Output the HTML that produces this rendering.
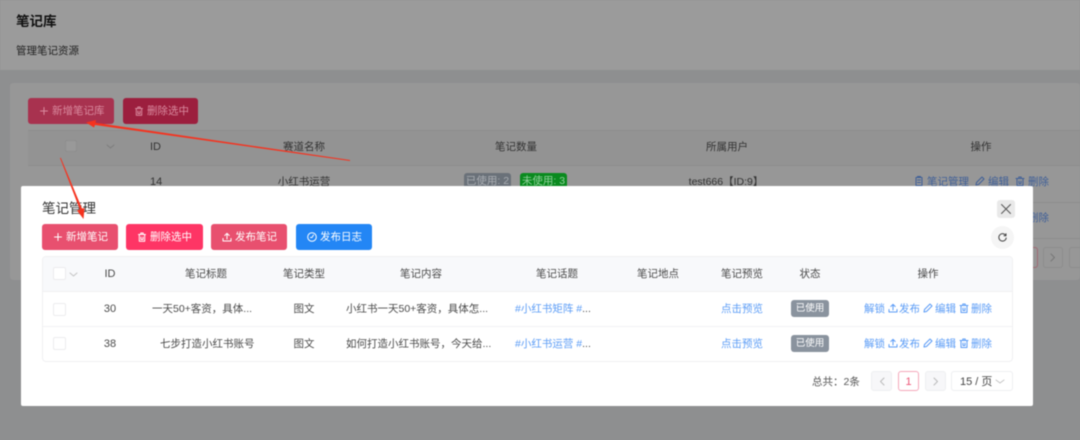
<!DOCTYPE html>
<html lang="zh"><head><meta charset="utf-8"><title>笔记库</title>
<style>
*{box-sizing:border-box;margin:0;padding:0}
html,body{width:1080px;height:440px;overflow:hidden;background:#8e8f90}
body{font-family:"Liberation Sans","Noto Sans CJK SC",sans-serif;font-size:10.5px;color:#4a4a4a}
#w{position:absolute;left:0;top:0;width:1080px;height:440px;overflow:hidden;filter:blur(.5px)}
.a{position:absolute}
.t{position:absolute;white-space:nowrap;line-height:14px;height:14px}
.c{transform:translateX(-50%)}
.b{position:absolute;height:26px;border-radius:3px;color:#fff;line-height:26px;white-space:nowrap}
.b svg,.i{position:absolute}
.l{color:#5b9cf6}
.dl{color:#3f5f97}
svg{fill:none;stroke:currentColor;stroke-width:1;stroke-linecap:round;stroke-linejoin:round;overflow:visible}
.cb{position:absolute;width:13px;height:13px;border:1px solid #ececee;border-radius:2px;background:#fff}
.tag{position:absolute;border-radius:3px;color:#fff;text-align:center;white-space:nowrap}
.p{position:absolute;height:20px;top:371px;border:1px solid #eeeff1;border-radius:3px;background:#fff}
</style></head><body>
<div id="w">
<div class="a" style="left:0;top:0;width:1080px;height:70px;background:#9b9b9b"></div>
<div class="a" style="left:10px;top:83px;width:1070px;height:197px;background:#979797;border-radius:3px"></div>

<div class="t" style="left:16px;top:15px;font-size:13.5px;font-weight:700;color:#111">笔记库</div>
<div class="t" style="left:16px;top:44px;color:#222">管理笔记资源</div>

<div class="b" style="left:28px;top:98px;width:86px;background:#a8324f;color:#d98a9e"><svg style="left:11px;top:8px" width="10" height="10" viewBox="0 0 10 10"><path d="M5 1.500v7M1.500 5h7"/></svg><span style="position:absolute;left:24px">新增笔记库</span></div>
<div class="b" style="left:123px;top:98px;width:75px;background:#9c1f3e;color:#d98a9e"><svg style="left:11px;top:8px" width="10" height="10" viewBox="0 0 10 10"><path d="M1.500 2.500h7M3.800 2.500V1h2.400v1.500M2.300 2.500v6.800h5.400V2.500M4 5v2.500h2V5"/></svg><span style="position:absolute;left:24px">删除选中</span></div>

<div class="a" style="left:28px;top:130px;width:1052px;height:36px;background:#939393;border-top:1px solid #8e8e8e;border-bottom:1px solid #8e8e8e"></div>
<div class="a" style="left:28px;top:202px;width:1052px;height:1px;background:#8d8d8d"></div>
<div class="a" style="left:28px;top:238px;width:1052px;height:1px;background:#8d8d8d"></div>
<div class="a" style="left:65px;top:140px;width:12px;height:12px;background:#999;border:1px solid #8e8e8e;border-radius:2px"></div>
<svg class="i" style="left:106px;top:144px;color:#7d7d7d" width="9" height="5" viewBox="0 0 9 5"><path d="M1 1l3.500 3L8 1"/></svg>
<div class="t" style="left:150px;top:140px;color:#333;font-size:11px">ID</div>
<div class="t c" style="left:304px;top:140px;color:#333">赛道名称</div>
<div class="t c" style="left:516px;top:140px;color:#333">笔记数量</div>
<div class="t c" style="left:727px;top:140px;color:#333">所属用户</div>
<div class="t c" style="left:981px;top:140px;color:#333">操作</div>
<div class="t" style="left:150px;top:175px;color:#333;font-size:11px">14</div>
<div class="t c" style="left:304px;top:175px;color:#333">小红书运营</div>
<div class="tag" style="left:464px;top:173px;width:47px;height:18px;line-height:16px;background:#6a7179;color:#a9adb2">已使用: 2</div>
<div class="tag" style="left:520px;top:173px;width:47px;height:18px;line-height:16px;background:#0a8a1f;color:#8fd09a">未使用: 3</div>
<div class="t c" style="left:726px;top:175px;color:#333;font-size:10.5px">test666【ID:9】</div>
<svg class="i dl" style="left:914px;top:176px" width="10" height="10" viewBox="0 0 10 10"><path d="M2 1.500h6v8H2zM3.500 1V.5h3V1M3.500 4h3M3.500 6.500h3"/></svg>
<div class="t dl" style="left:927px;top:175px">笔记管理</div>
<svg class="i dl" style="left:975px;top:176px" width="10" height="10" viewBox="0 0 10 10"><path d="M1 9l.5-2.500L7 1l2 2-5.500 5.500z"/></svg>
<div class="t dl" style="left:988px;top:175px">编辑</div>
<svg class="i dl" style="left:1015px;top:176px" width="10" height="10" viewBox="0 0 10 10"><path d="M1 2.500h8M3.800 2.500V1h2.400v1.500M2 2.500v7h6v-7M4 5v2.500h2V5"/></svg>
<div class="t dl" style="left:1028px;top:175px">删除</div>
<div class="t dl" style="left:1028px;top:211px">删除</div>
<div class="a" style="left:1020px;top:247px;width:18px;height:21px;border:1px solid #a06a74;border-radius:3px"></div>
<div class="a" style="left:1043px;top:247px;width:20px;height:21px;border:1px solid #8d8d8d;border-radius:3px"></div>
<svg class="i" style="left:1050px;top:253px;color:#777" width="6" height="9" viewBox="0 0 6 9"><path d="M1 1l3.500 3.500L1 8"/></svg>
<div class="a" style="left:1069px;top:247px;width:20px;height:21px;border:1px solid #8d8d8d;border-radius:3px"></div>

<!-- modal -->
<div class="a" style="left:21px;top:186px;width:1012px;height:220px;background:#fff;border-radius:2px"></div>
<div class="t" style="left:42px;top:202px;font-size:13.5px;color:#333">笔记管理</div>
<div class="a" style="left:997px;top:200px;width:18px;height:18px;background:#e9e9e9;border-radius:3px"></div>
<svg class="i" style="left:1001px;top:204px;color:#555" width="10" height="10" viewBox="0 0 10 10"><path d="M.5.500l9 9M9.500.500l-9 9"/></svg>

<div class="b" style="left:42px;top:224px;width:76px;background:#e8506f"><svg style="left:11px;top:8px" width="10" height="10" viewBox="0 0 10 10"><path d="M5 1.500v7M1.500 5h7"/></svg><span style="position:absolute;left:24px">新增笔记</span></div>
<div class="b" style="left:126px;top:224px;width:77px;background:#fe3565"><svg style="left:11px;top:8px" width="10" height="10" viewBox="0 0 10 10"><path d="M1.500 2.500h7M3.800 2.500V1h2.400v1.500M2.300 2.500v6.800h5.400V2.500M4 5v2.500h2V5"/></svg><span style="position:absolute;left:24px">删除选中</span></div>
<div class="b" style="left:211px;top:224px;width:76px;background:#e8506f"><svg style="left:11px;top:8px" width="10" height="10" viewBox="0 0 10 10"><path d="M5 7V1.500M2.800 3.500L5 1.300l2.200 2.200M1 6.500v2.500h8V6.500"/></svg><span style="position:absolute;left:24px">发布笔记</span></div>
<div class="b" style="left:296px;top:224px;width:76px;background:#2386f5"><svg style="left:11px;top:8px" width="10" height="10" viewBox="0 0 10 10"><circle cx="5" cy="5" r="4.300"/><path d="M6.500 3L5 5.500H3.500"/></svg><span style="position:absolute;left:24px">发布日志</span></div>

<div class="a" style="left:991px;top:226px;width:23px;height:23px;border-radius:50%;background:#f5f5f5"></div>
<svg class="i" style="left:998px;top:233px;color:#444" width="9" height="9" viewBox="0 0 9 9"><path d="M7.800 2.600A3.700 3.700 0 1 0 8.200 5M8 .8v2H6"/></svg>

<div class="a" style="left:42px;top:256px;width:971px;height:106px;border:1px solid #f0f0f2;border-radius:4px;overflow:hidden">
  <div class="a" style="left:0;top:0;width:971px;height:35px;background:#f8f9fb;border-bottom:1px solid #f0f0f2"></div>
  <div class="a" style="left:0;top:69px;width:971px;height:1px;background:#f2f2f4"></div>
</div>
<div class="cb" style="left:53px;top:267px"></div>
<svg class="i" style="left:69px;top:272px;color:#c4c4c4" width="9" height="5" viewBox="0 0 9 5"><path d="M1 1l3.500 3L8 1"/></svg>
<div class="t c" style="left:110px;top:267px;font-size:11px">ID</div>
<div class="t c" style="left:206px;top:267px">笔记标题</div>
<div class="t c" style="left:304px;top:267px">笔记类型</div>
<div class="t c" style="left:421px;top:267px">笔记内容</div>
<div class="t c" style="left:557px;top:267px">笔记话题</div>
<div class="t c" style="left:658px;top:267px">笔记地点</div>
<div class="t c" style="left:742px;top:267px">笔记预览</div>
<div class="t c" style="left:810px;top:267px">状态</div>
<div class="t c" style="left:928px;top:267px">操作</div>

<div class="cb" style="left:53px;top:303px"></div>
<div class="t c" style="left:110px;top:302px;font-size:11px">30</div>
<div class="t" style="left:152px;top:302px">一天50+客资，具体...</div>
<div class="t c" style="left:304px;top:302px">图文</div>
<div class="t" style="left:346px;top:302px">小红书一天50+客资，具体怎...</div>
<div class="t" style="left:515px;top:302px"><span class="l">#小红书矩阵 #</span>...</div>
<div class="t l" style="left:721px;top:302px">点击预览</div>
<div class="tag" style="left:791px;top:300px;width:38px;height:17px;line-height:17px;background:#8a939e;font-size:9.500px">已使用</div>

<div class="cb" style="left:53px;top:337px"></div>
<div class="t c" style="left:110px;top:337px;font-size:11px">38</div>
<div class="t" style="left:160px;top:337px">七步打造小红书账号</div>
<div class="t c" style="left:304px;top:337px">图文</div>
<div class="t" style="left:346px;top:337px">如何打造小红书账号，今天给...</div>
<div class="t" style="left:515px;top:337px"><span class="l">#小红书运营 #</span>...</div>
<div class="t l" style="left:721px;top:337px">点击预览</div>
<div class="tag" style="left:791px;top:335px;width:38px;height:17px;line-height:17px;background:#8a939e;font-size:9.500px">已使用</div>

<!-- row actions 1 -->
<div class="t l" style="left:864px;top:302px">解锁</div>
<svg class="i l" style="left:888px;top:303px" width="10" height="10" viewBox="0 0 10 10"><path d="M5 7V1.500M2.800 3.500L5 1.300l2.200 2.200M1 6.500v2.500h8V6.500"/></svg>
<div class="t l" style="left:899px;top:302px">发布</div>
<svg class="i l" style="left:923px;top:303px" width="10" height="10" viewBox="0 0 10 10"><path d="M1 9l.5-2.500L7 1l2 2-5.500 5.500z"/></svg>
<div class="t l" style="left:935px;top:302px">编辑</div>
<svg class="i l" style="left:959px;top:303px" width="10" height="10" viewBox="0 0 10 10"><path d="M1 2.500h8M3.800 2.500V1h2.400v1.500M2 2.500v7h6v-7M4 5v2.500h2V5"/></svg>
<div class="t l" style="left:971px;top:302px">删除</div>
<!-- row actions 2 -->
<div class="t l" style="left:864px;top:337px">解锁</div>
<svg class="i l" style="left:888px;top:338px" width="10" height="10" viewBox="0 0 10 10"><path d="M5 7V1.500M2.800 3.500L5 1.300l2.200 2.200M1 6.500v2.500h8V6.500"/></svg>
<div class="t l" style="left:899px;top:337px">发布</div>
<svg class="i l" style="left:923px;top:338px" width="10" height="10" viewBox="0 0 10 10"><path d="M1 9l.5-2.500L7 1l2 2-5.500 5.500z"/></svg>
<div class="t l" style="left:935px;top:337px">编辑</div>
<svg class="i l" style="left:959px;top:338px" width="10" height="10" viewBox="0 0 10 10"><path d="M1 2.500h8M3.800 2.500V1h2.400v1.500M2 2.500v7h6v-7M4 5v2.500h2V5"/></svg>
<div class="t l" style="left:971px;top:337px">删除</div>

<!-- pagination -->
<div class="t" style="left:812px;top:375px;color:#555">总共：2条</div>
<div class="p" style="left:871px;width:21px;background:#f7f7f9"></div>
<svg class="i" style="left:879px;top:377px;color:#bbb" width="6" height="9" viewBox="0 0 6 9"><path d="M5 1L1.500 4.500 5 8"/></svg>
<div class="p" style="left:898px;width:21px;border-color:#f5a8bb"></div>
<div class="t c" style="left:908.500px;top:375px;color:#ee5577;font-size:11px">1</div>
<div class="p" style="left:925px;width:21px;background:#f7f7f9"></div>
<svg class="i" style="left:933px;top:377px;color:#bbb" width="6" height="9" viewBox="0 0 6 9"><path d="M1 1l3.500 3.500L1 8"/></svg>
<div class="p" style="left:951px;width:62px"></div>
<div class="t" style="left:960px;top:375px;color:#444;font-size:11px">15 / 页</div>
<svg class="i" style="left:995px;top:379px;color:#c4c4c4" width="10" height="5" viewBox="0 0 10 5"><path d="M1 1l4 3 4-3"/></svg>

<!-- annotation arrows -->
<svg class="a" style="left:0;top:0;stroke:none" width="1080" height="440" viewBox="0 0 1080 440">
<path style="fill:#f5331f;stroke:none" d="M86 122.500L96 120L95.500 122.800L350 160L350 161L95 125L94 127.500Z"/>
<path style="fill:#f5331f;stroke:none" d="M83.500 219L77 210.500L79.800 209.500L60 158L60.800 157.800L82 208.500L84.500 208Z"/>
</svg>
</div>
</body></html>
